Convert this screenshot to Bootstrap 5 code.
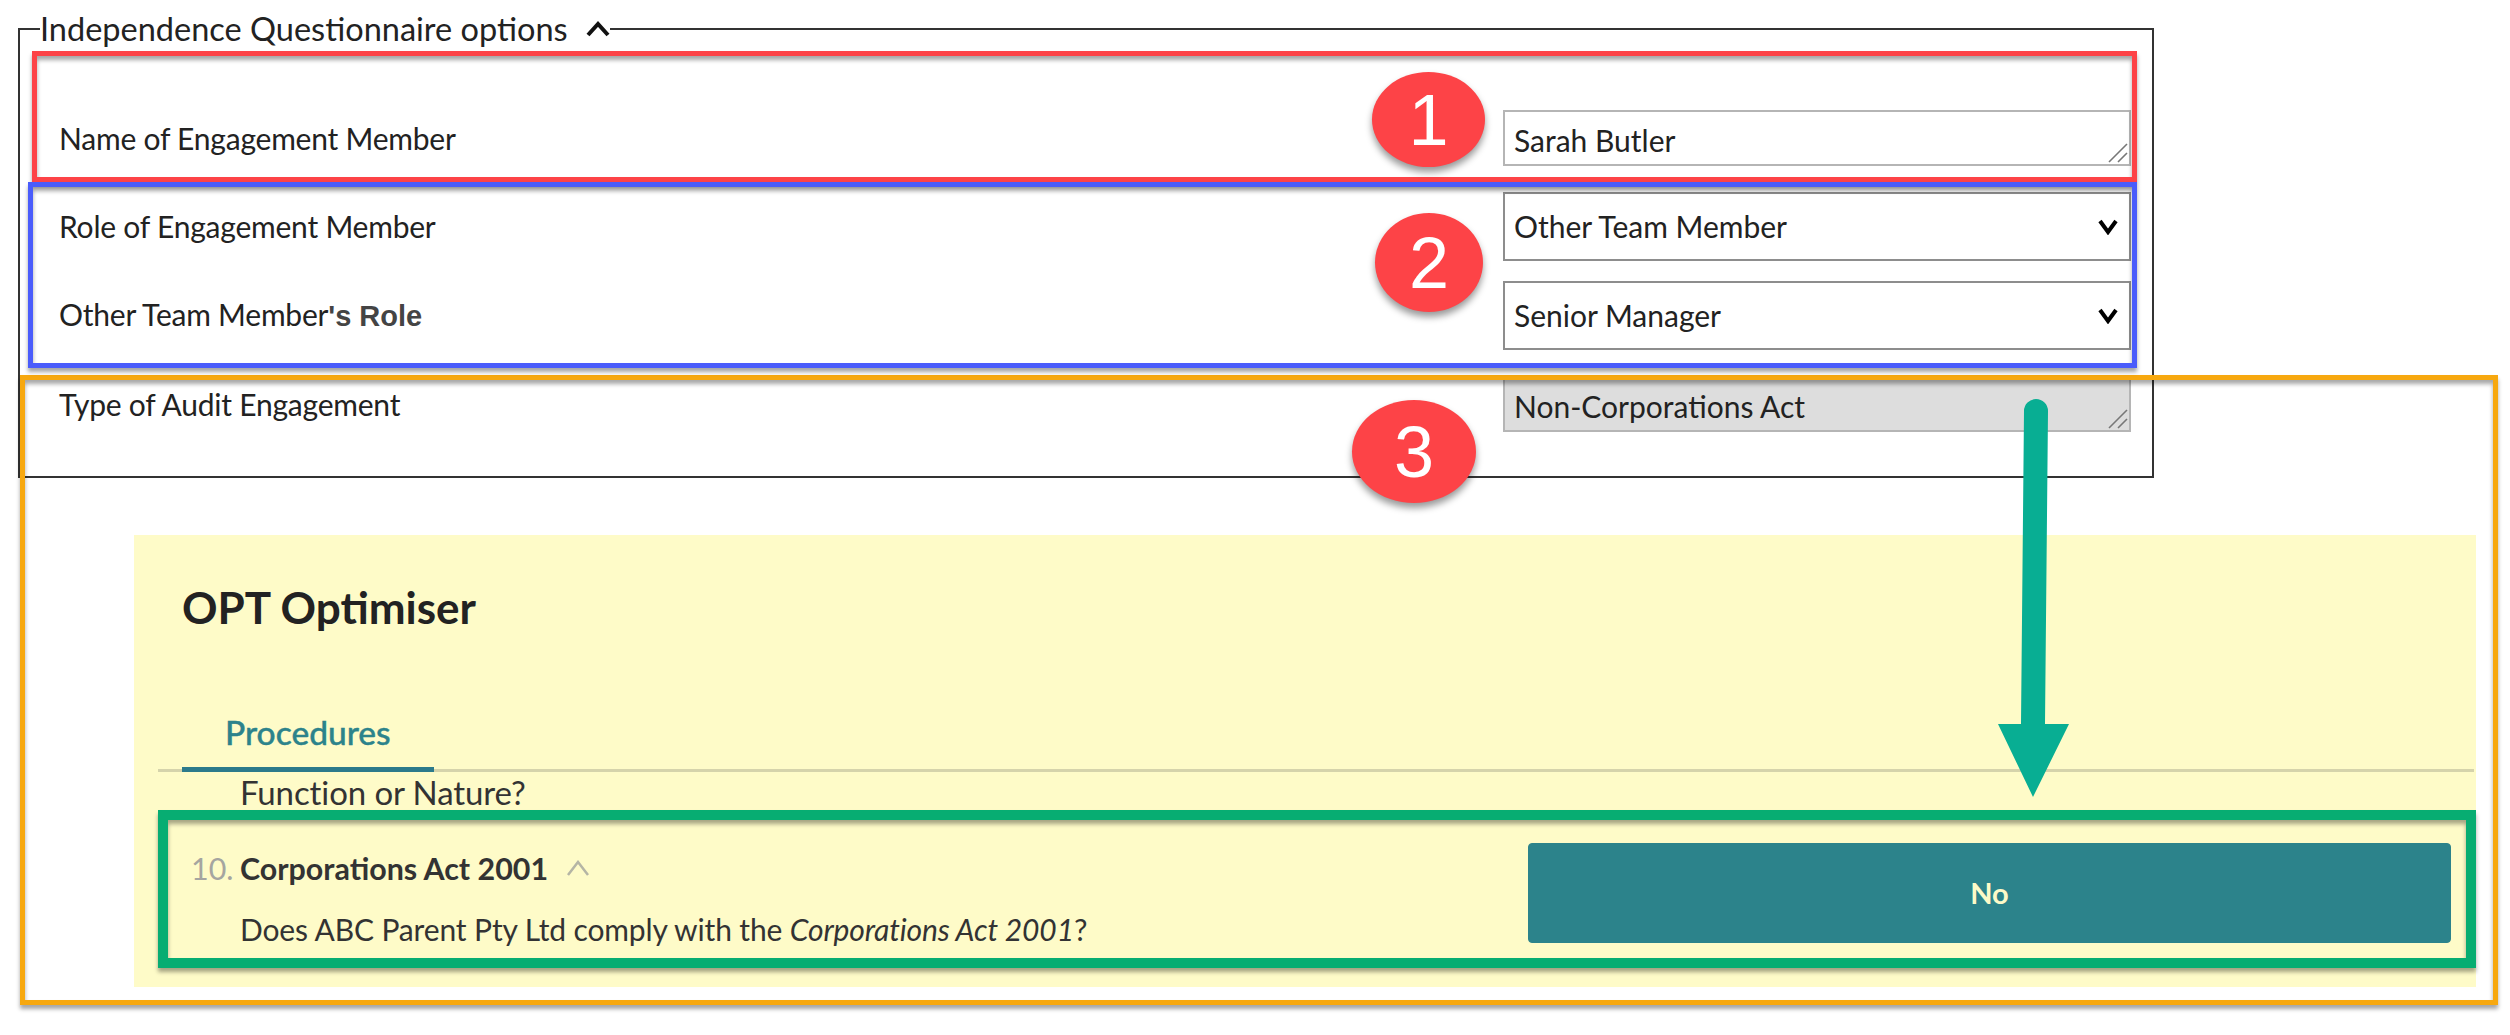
<!DOCTYPE html>
<html lang="en">
<head>
<meta charset="utf-8">
<title>Independence Questionnaire options</title>
<link rel="stylesheet" href="https://cdn.jsdelivr.net/npm/bootstrap@5.3.0/dist/css/bootstrap.min.css">
<style>
html,body{height:1035px;overflow:hidden;background:#fff}
body{font-family:"Lato","Liberation Sans",sans-serif;color:#222;font-size:30px;position:relative}
.page-wrap{padding-top:14px}
.opt-field{margin:0 0 0 18px;width:2136px;height:464px;border:2px solid #333;padding:0 21px 0 21px;min-width:0}
.opt-field legend{float:none;width:auto;margin:0 0 0 -1px;padding:0;font-size:32.5px;line-height:30px;display:flex;align-items:center;gap:18px;color:#222}
.opt-rows{padding:66px 0 0 18px}
.opt-line{display:flex;align-items:center;justify-content:space-between}
.opt-line > span{letter-spacing:-.22px}
.opt-line + .opt-line{margin-top:20px}
.opt-line.tall + .opt-line,.opt-line + .opt-line.tall{margin-top:26px}
.opt-ctl{width:628px;flex:none}
.opt-ctl .form-control,.opt-ctl .form-select{border-radius:0;border:2px solid #b5b5b5;font-size:30px;color:#222;padding:0 9px;box-shadow:none}
.opt-ctl .form-control{height:56px;min-height:56px;padding-top:11px;line-height:34px;resize:none;background-repeat:no-repeat;background-position:right 1px bottom 1px;background-size:20px 20px;
 background-image:url("data:image/svg+xml,%3csvg xmlns='http://www.w3.org/2000/svg' viewBox='0 0 20 20'%3e%3cpath fill='none' stroke='%23777' stroke-width='1.6' d='M19 1L1 19M19 10L10 19'/%3e%3c/svg%3e")}
.opt-ctl .form-control:disabled{background-color:#ddd;opacity:1}
.opt-ctl .form-select{height:69px;border-color:#8d8d8d;background-size:22px 16px;background-position:right 10px center;
 background-image:url("data:image/svg+xml,%3csvg xmlns='http://www.w3.org/2000/svg' viewBox='0 0 22 16'%3e%3cpath fill='none' stroke='%23000' stroke-width='4' d='M3 2l8 11 8-11'/%3e%3c/svg%3e")}
.arial-bit{font-family:"Liberation Sans",sans-serif;font-size:29px;color:#444;font-weight:700;letter-spacing:0}
.opt-panel{margin:57px 0 0 134px;width:2342px;height:452px;background:#fefbc8;padding:44px 2px 0 24px}
.opt-title{font-size:44px;font-weight:700;line-height:56px;margin:0 0 0 24px;color:#222}
.opt-tabs{margin-top:72px;border-bottom:3px solid #d5d3ab;padding-left:24px}
.opt-tabs .nav-link,.opt-tabs .nav-link.active{border:0;background:none;border-bottom:5px solid #2c7a8b;border-radius:0;margin-bottom:-3px;padding:2px 43px 12px;font-size:33.5px;line-height:46px;color:#2c838b;font-weight:500;-webkit-text-stroke:.4px #2c838b}
.opt-cut{margin:1px 0 0 82px;line-height:38px;font-size:33px;color:#333;letter-spacing:-.1px}
.opt-q{display:flex;padding:32px 23px 0 33px;justify-content:space-between}
.opt-num{color:#a5a5a0;width:49px;flex:none}
.opt-left{margin-top:5px}
.opt-qh{font-weight:700;color:#333;line-height:40px;display:flex;align-items:center;gap:18px;font-size:30.4px}
.opt-qt{margin:21px 0 0 49px;color:#333;line-height:40px;letter-spacing:-.13px}
.opt-btn{width:923px;height:100px;background:#2c838b;border-color:#2c838b;color:#fdfac8;font-weight:700;font-size:29px;border-radius:4px;flex:none}
.opt-btn:hover{background:#2c838b;border-color:#2c838b;color:#fdfac8}
.box-mark{position:absolute;border-style:solid;border-width:5px;pointer-events:none;box-shadow:0 4px 4px rgba(0,0,0,.35),inset 0 4px 4px rgba(0,0,0,.35)}
.box-red{left:32px;top:51px;width:2105px;height:131px;border-color:#fd4347}
.box-blue{left:28px;top:182px;width:2109px;height:186px;border-color:#4a5cfb}
.box-orange{left:20px;top:375px;width:2478px;height:630px;border-color:#f7a80f}
.box-green{left:158px;top:810px;width:2318px;height:158px;border-color:#07ad72;border-width:10px}
.dot-mark{position:absolute;background:#fd4347;border-radius:50%;color:#fff;font-family:"Liberation Sans",sans-serif;font-size:72px;display:flex;align-items:center;justify-content:center;box-shadow:0 5px 7px rgba(0,0,0,.4);line-height:1}
.dot-1{left:1372px;top:72px;width:113px;height:95px}
.dot-2{left:1375px;top:213px;width:108px;height:99px}
.dot-3{left:1352px;top:400px;width:124px;height:103px}
.arrow-mark{position:absolute;left:1990px;top:395px;width:90px;height:410px;overflow:visible}
</style>
</head>
<body>
<div class="page-wrap">
  <fieldset class="opt-field">
    <legend>Independence Questionnaire options
      <svg width="24" height="16" viewBox="0 0 24 16" aria-hidden="true"><path d="M2 14L12 3l10 11" fill="none" stroke="#111" stroke-width="4"/></svg>
    </legend>
    <div class="opt-rows">
      <div class="opt-line tall">
        <span>Name of Engagement Member</span>
        <div class="opt-ctl"><textarea class="form-control" rows="1">Sarah Butler</textarea></div>
      </div>
      <div class="opt-line">
        <span>Role of Engagement Member</span>
        <div class="opt-ctl"><select class="form-select"><option>Other Team Member</option></select></div>
      </div>
      <div class="opt-line">
        <span>Other Team Member<span class="arial-bit">'s Role</span></span>
        <div class="opt-ctl"><select class="form-select"><option>Senior Manager</option></select></div>
      </div>
      <div class="opt-line tall">
        <span>Type of Audit Engagement</span>
        <div class="opt-ctl"><textarea class="form-control" rows="1" disabled>Non-Corporations Act</textarea></div>
      </div>
    </div>
  </fieldset>

  <section class="opt-panel">
    <h2 class="opt-title">OPT Optimiser</h2>
    <ul class="nav nav-tabs opt-tabs">
      <li class="nav-item"><a class="nav-link active" href="#">Procedures</a></li>
    </ul>
    <div class="opt-cut">Function or Nature?</div>
    <div class="opt-q">
      <div class="opt-left">
        <div class="opt-qh"><span class="d-flex"><span class="opt-num fw-normal">10.</span>Corporations Act 2001</span>
          <svg width="24" height="16" viewBox="0 0 24 16" aria-hidden="true"><path d="M2 15L12 2l10 13" fill="none" stroke="#b5b5a5" stroke-width="2.5"/></svg>
        </div>
        <div class="opt-qt">Does ABC Parent Pty Ltd comply with the <em>Corporations Act 2001</em>?</div>
      </div>
      <button type="button" class="btn opt-btn">No</button>
    </div>
  </section>
</div>

<div class="box-mark box-orange"></div>
<div class="box-mark box-red"></div>
<div class="box-mark box-blue"></div>
<div class="box-mark box-green"></div>
<div class="dot-mark dot-1">1</div>
<div class="dot-mark dot-2">2</div>
<div class="dot-mark dot-3">3</div>
<svg class="arrow-mark" viewBox="0 0 90 410" aria-hidden="true">
  <path d="M34 16a12 12 0 0 1 24 0L55 329H79L43 402 8 329H31Z" fill="#08ae93"/>
</svg>
</body>
</html>
